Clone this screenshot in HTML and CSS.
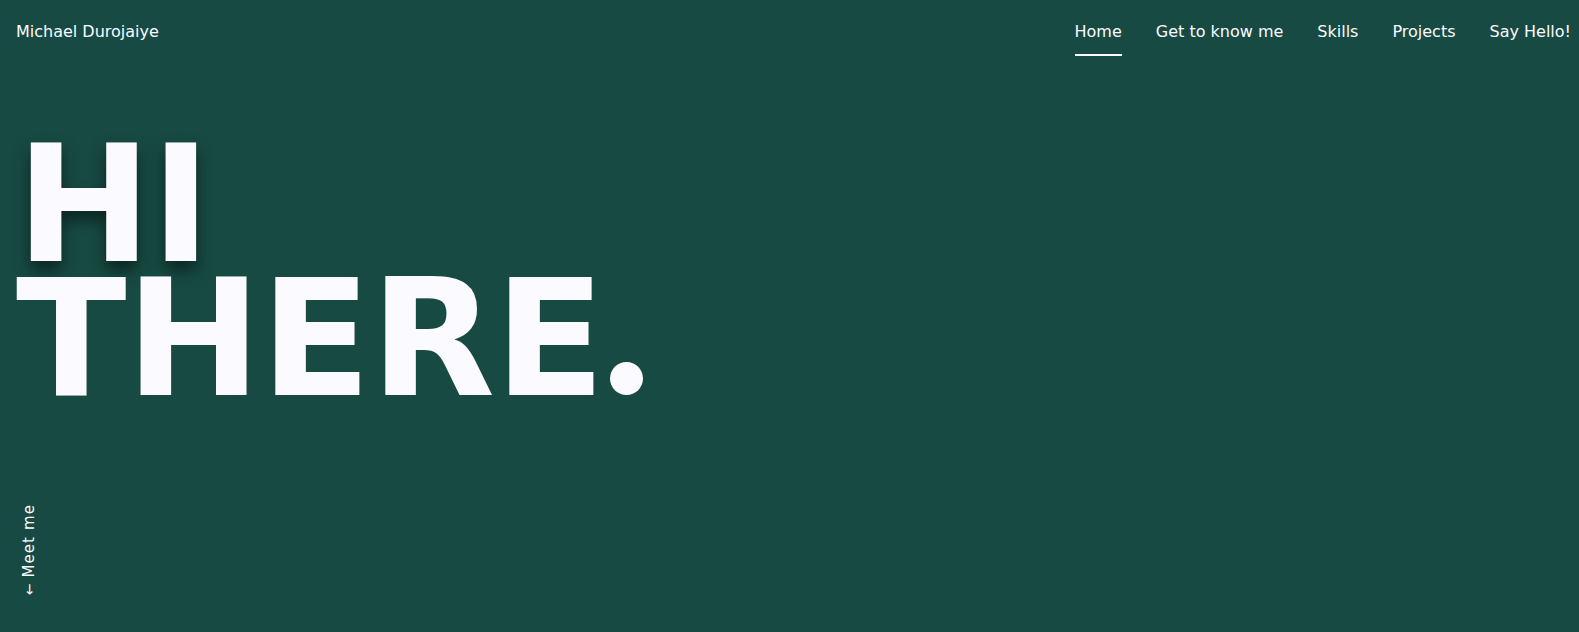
FILE: index.html
```html
<!DOCTYPE html>
<html lang="en">
<head>
<meta charset="utf-8">
<title>Michael Durojaiye</title>
<link rel="stylesheet" href="styles.css">
</head>
<body>
<div class="page">
  <header class="topbar">
    <a class="brand" href="#">Michael Durojaiye</a>
    <nav class="nav">
      <a class="nav-link is-active" href="#">Home</a>
      <a class="nav-link" href="#">Get to know me</a>
      <a class="nav-link" href="#">Skills</a>
      <a class="nav-link" href="#">Projects</a>
      <a class="nav-link" href="#">Say Hello!</a>
    </nav>
  </header>
  <main class="hero">
    <h1 class="hero-title">
      <span class="hero-line hero-line--shadow">HI</span>
      <span class="hero-line">THERE<span class="hero-dot">.</span></span>
    </h1>
  </main>
  <footer class="scroll-cue">
    <a class="meet" href="#"><span class="meet-arrow">←</span> Meet me</a>
  </footer>
</div>
</body>
</html>
```
FILE: styles.css
```css
* { box-sizing: border-box; }
html, body { margin: 0; padding: 0; }
body {
  background: #174a43;
  color: #fbfaff;
  font-family: "DejaVu Sans", "Liberation Sans", sans-serif;
}
a { color: inherit; text-decoration: none; }

.page {
  height: 100vh;
  display: flex;
  flex-direction: column;
}

.topbar {
  display: flex;
  justify-content: space-between;
  align-items: flex-start;
  padding: 0 8px 0 16px;
  height: 56px;
}
.brand {
  font-size: 16px;
  line-height: 19px;
  padding-top: 22px;
}
.nav {
  display: flex;
  gap: 34px;
}
.nav-link {
  display: block;
  font-size: 16px;
  line-height: 19px;
  padding: 22px 0 13px;
  border-bottom: 2px solid transparent;
}
.nav-link.is-active { border-bottom-color: #fbfaff; }

.hero {
  flex: 1;
  padding: 82px 0 0 16px;
}
.hero-title {
  margin: 0;
  font-family: "DejaVu Sans", sans-serif;
  font-weight: 700;
  font-size: 162px;
  line-height: 134px;
  letter-spacing: -0.75px;
  color: #fbfaff;
}
.hero-line { display: block; }
.hero-line--shadow {
  text-shadow: 0 9px 16px rgba(0, 0, 0, 0.5);
}
.hero-dot {
  display: inline-block;
  overflow: hidden;
  width: 33px;
  height: 33px;
  margin-left: 6px;
  border-radius: 50%;
  background: #fbfaff;
  color: transparent;
  font-size: 20px;
  line-height: 33px;
  vertical-align: baseline;
}

.scroll-cue {
  padding: 0 0 33px 22px;
}
.meet {
  display: inline-block;
  writing-mode: vertical-rl;
  transform: rotate(180deg);
  font-size: 15px;
  line-height: 14px;
  letter-spacing: 1.1px;
}
.meet-arrow { font-size: 14px; letter-spacing: 0; }
```
